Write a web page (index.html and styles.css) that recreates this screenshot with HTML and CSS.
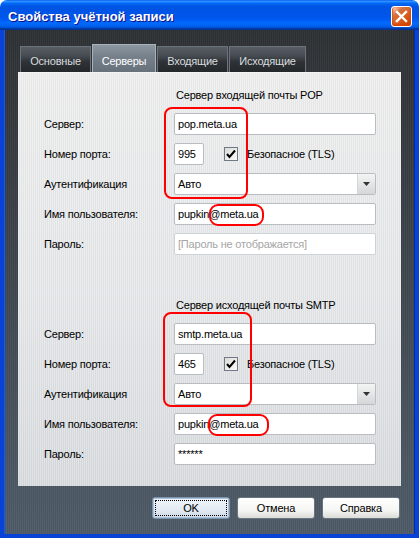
FILE: index.html
```html
<!DOCTYPE html>
<html lang="ru">
<head>
  <meta charset="UTF-8" />
  <title>Свойства учётной записи</title>
  <link rel="stylesheet" href="styles.css">
</head>
<body>

  <div class="window">
    <div class="titlebar">
      <span class="title">Свойства учётной записи</span>
      <div class="close">
        <svg width="13" height="13" viewBox="0 0 13 13">
          <path d="M2 2 L11 11 M11 2 L2 11" stroke="#fff" stroke-width="2.4" stroke-linecap="square" fill="none"/>
        </svg>
      </div>
    </div>

    <div class="frame">
      <div class="tabs">
        <div class="tab t1">Основные</div>
        <div class="tab t2 active">Серверы</div>
        <div class="tab t3">Входящие</div>
        <div class="tab t4">Исходящие</div>
      </div>

      <div class="panel">
        <div class="group">
          <div class="group-title">Сервер входящей почты POP</div>
          <div class="row">
            <span class="label">Сервер:</span>
            <div class="field">pop.meta.ua</div>
          </div>
          <div class="row">
            <span class="label">Номер порта:</span>
            <div class="field port">995</div>
            <span class="check"><svg width="12" height="12" viewBox="0 0 12 12"><path d="M2 6 L4.5 9 L10 2.5" stroke="#000" stroke-width="2" fill="none"/></svg></span>
            <span class="check-label">Безопасное (TLS)</span>
          </div>
          <div class="row">
            <span class="label">Аутентификация</span>
            <div class="field select">Авто<span class="arrow"><svg width="7" height="4" viewBox="0 0 7 4"><path d="M0 0 H7 L3.5 4 Z" fill="#333"/></svg></span></div>
          </div>
          <div class="row">
            <span class="label">Имя пользователя:</span>
            <div class="field">pupkin@meta.ua</div>
          </div>
          <div class="row">
            <span class="label">Пароль:</span>
            <div class="field disabled">[Пароль не отображается]</div>
          </div>
        </div>

        <div class="group">
          <div class="group-title">Сервер исходящей почты SMTP</div>
          <div class="row">
            <span class="label">Сервер:</span>
            <div class="field">smtp.meta.ua</div>
          </div>
          <div class="row">
            <span class="label">Номер порта:</span>
            <div class="field port">465</div>
            <span class="check"><svg width="12" height="12" viewBox="0 0 12 12"><path d="M2 6 L4.5 9 L10 2.5" stroke="#000" stroke-width="2" fill="none"/></svg></span>
            <span class="check-label">Безопасное (TLS)</span>
          </div>
          <div class="row">
            <span class="label">Аутентификация</span>
            <div class="field select">Авто<span class="arrow"><svg width="7" height="4" viewBox="0 0 7 4"><path d="M0 0 H7 L3.5 4 Z" fill="#333"/></svg></span></div>
          </div>
          <div class="row">
            <span class="label">Имя пользователя:</span>
            <div class="field">pupkin@meta.ua</div>
          </div>
          <div class="row">
            <span class="label">Пароль:</span>
            <div class="field">******</div>
          </div>
        </div>

        <!-- red marks drawn over the screenshot -->
        <div class="mark box-pop"></div>
        <div class="mark oval-pop"></div>
        <div class="mark box-smtp"></div>
        <div class="mark oval-smtp"></div>
      </div>

      <div class="buttons">
        <button class="btn default"><span>OK</span></button>
        <button class="btn">Отмена</button>
        <button class="btn">Справка</button>
      </div>
    </div>
  </div>

</body>
</html>
```

FILE: styles.css
```css
html, body {
  margin: 0;
  padding: 0;
}

body {
  font-family: 'Liberation Sans', Arial, sans-serif;
  font-size: 11px;
  letter-spacing: -0.2px;
  color: #000;
  width: 419px;
  height: 538px;
  overflow: hidden;
}

.window {
  width: 419px;
  height: 538px;
  display: flex;
  flex-direction: column;
}

.titlebar {
  height: 30px;
  flex: none;
  display: flex;
  align-items: center;
  justify-content: space-between;
  padding: 0 7px 0 8px;
  box-sizing: border-box;
  border-radius: 7px 7px 0 0;
  background: linear-gradient(to bottom, #0058ee 0%, #3593ff 4%, #288eff 6%, #127dff 8%, #036ffc 10%, #0262ee 14%, #0057e5 20%, #0054e3 24%, #0055eb 56%, #005bf5 66%, #026afe 76%, #0062ef 86%, #0052d6 92%, #0040ab 94%, #003092 100%);
}

.title {
  font-family: 'Liberation Sans', Arial, sans-serif;
  font-weight: bold;
  font-size: 13px;
  letter-spacing: 0;
  color: #fff;
  text-shadow: 1px 1px #0f1089;
  margin-top: 2px;
}

.close {
  width: 21px;
  height: 21px;
  box-sizing: border-box;
  border: 1px solid #fff;
  border-radius: 3px;
  display: flex;
  align-items: center;
  justify-content: center;
  margin-top: 2px;
  background: radial-gradient(circle at 90% 90%, #cc4600 0%, #dc6527 55%, #cd7546 70%, #ffccb2 90%, #fff 100%);
  box-shadow: inset 0 -1px 2px 1px #da4600;
}

.frame {
  flex: 1;
  border: 4px solid #0842d6;
  border-top: none;
  box-shadow: inset 1px 0 #1a5ae8, inset -1px 0 #002ea8;
  padding: 14px 14px 0;
  background:
    repeating-linear-gradient(90deg, rgba(255,255,255,0.035) 0 1px, rgba(0,0,0,0.04) 1px 2px),
    linear-gradient(to bottom, #2e3134 0%, #393e44 30%, #46505a 70%, #4e5b68 100%);
}

.tabs {
  display: flex;
  align-items: flex-end;
  height: 28px;
  margin-left: 2px;
  gap: 1px;
}

.tab {
  height: 26px;
  box-sizing: border-box;
  display: flex;
  align-items: center;
  justify-content: center;
  padding-top: 3px;
  color: #d9dcdf;
  border: 1px solid #6b727a;
  border-bottom: none;
  background: linear-gradient(to bottom, #585e65 0%, #474c52 35%, #2e3236 60%, #25282b 100%);
}

.tab.active {
  height: 28px;
  color: #fff;
  border-color: #a8b2bc;
  padding-top: 5px;
  background: linear-gradient(to bottom, #8c97a2 0%, #76818c 40%, #67717b 100%);
}

.t1 { width: 71px; }
.t2 { width: 64px; }
.t3 { width: 71px; }
.t4 { width: 77px; }

.panel {
  position: relative;
  height: 414px;
  box-sizing: border-box;
  padding: 14px 25px 0 26px;
  background:
    repeating-linear-gradient(90deg, rgba(255,255,255,0.25) 0 1px, rgba(0,0,0,0.02) 1px 2px),
    linear-gradient(to bottom, #ececec 0%, #e4e6e8 50%, #d6d9dc 100%);
  border-top: 1px solid #f4f4f4;
}

.group + .group {
  margin-top: 42px;
}

.group-title {
  height: 16px;
  line-height: 16px;
  margin: 0 0 10px 132px;
}

.row {
  display: flex;
  align-items: center;
  height: 22px;
  margin-bottom: 8px;
}

.label {
  width: 130px;
  flex: none;
}

.field {
  flex: 1;
  height: 22px;
  box-sizing: border-box;
  background: #fff;
  border: 1px solid #b9bdc1;
  border-radius: 2px;
  padding: 0 3px;
  line-height: 20px;
  white-space: nowrap;
  overflow: hidden;
}

.field.port {
  flex: none;
  width: 30px;
}

.field.disabled {
  color: #a5a5a5;
  border-color: #d0d3d6;
}

.field.select {
  position: relative;
}

.arrow {
  position: absolute;
  right: 0;
  top: 0;
  width: 17px;
  height: 20px;
  display: flex;
  align-items: center;
  justify-content: center;
  border-left: 1px solid #d4d6d8;
  background: linear-gradient(to bottom, #f4f4f4, #d4d6d8);
}

.check {
  width: 14px;
  height: 14px;
  box-sizing: border-box;
  margin-left: 20px;
  border: 1px solid #6f7a86;
  background: linear-gradient(to bottom right, #dcdcd6, #fafafa);
  display: flex;
  align-items: center;
  justify-content: center;
}

.check-label {
  margin-left: 9px;
}

.mark {
  position: absolute;
  box-sizing: border-box;
  border: 2px solid #ff0000;
  border-radius: 8px;
}

.box-pop { left: 146px; top: 34px; width: 84px; height: 92px; }
.oval-pop { left: 191px; top: 131px; width: 55px; height: 22px; border-radius: 9px; }
.box-smtp { left: 145px; top: 239px; width: 89px; height: 95px; }
.oval-smtp { left: 190px; top: 341px; width: 61px; height: 22px; border-radius: 9px; }

.buttons {
  display: flex;
  justify-content: flex-end;
  gap: 7px;
  margin-top: 11px;
  padding-right: 1px;
}

.btn {
  width: 78px;
  height: 22px;
  padding: 0;
  font-family: inherit;
  font-size: 11px;
  letter-spacing: -0.2px;
  color: #000;
  border: 1px solid #6a747e;
  border-radius: 3px;
  background: linear-gradient(to bottom, #ffffff 0%, #f6f6f4 60%, #dcdcd8 100%);
}

.btn.default {
  border-color: #7b93ac;
  box-shadow: inset 0 0 0 1px #a9c1dc;
  background: linear-gradient(to bottom, #f2f6fb 0%, #e2e9f2 60%, #cfd9e5 100%);
  padding: 2px;
}

.btn.default span {
  display: flex;
  align-items: center;
  justify-content: center;
  height: 100%;
  border: 1px dotted #000;
  box-sizing: border-box;
}
```
